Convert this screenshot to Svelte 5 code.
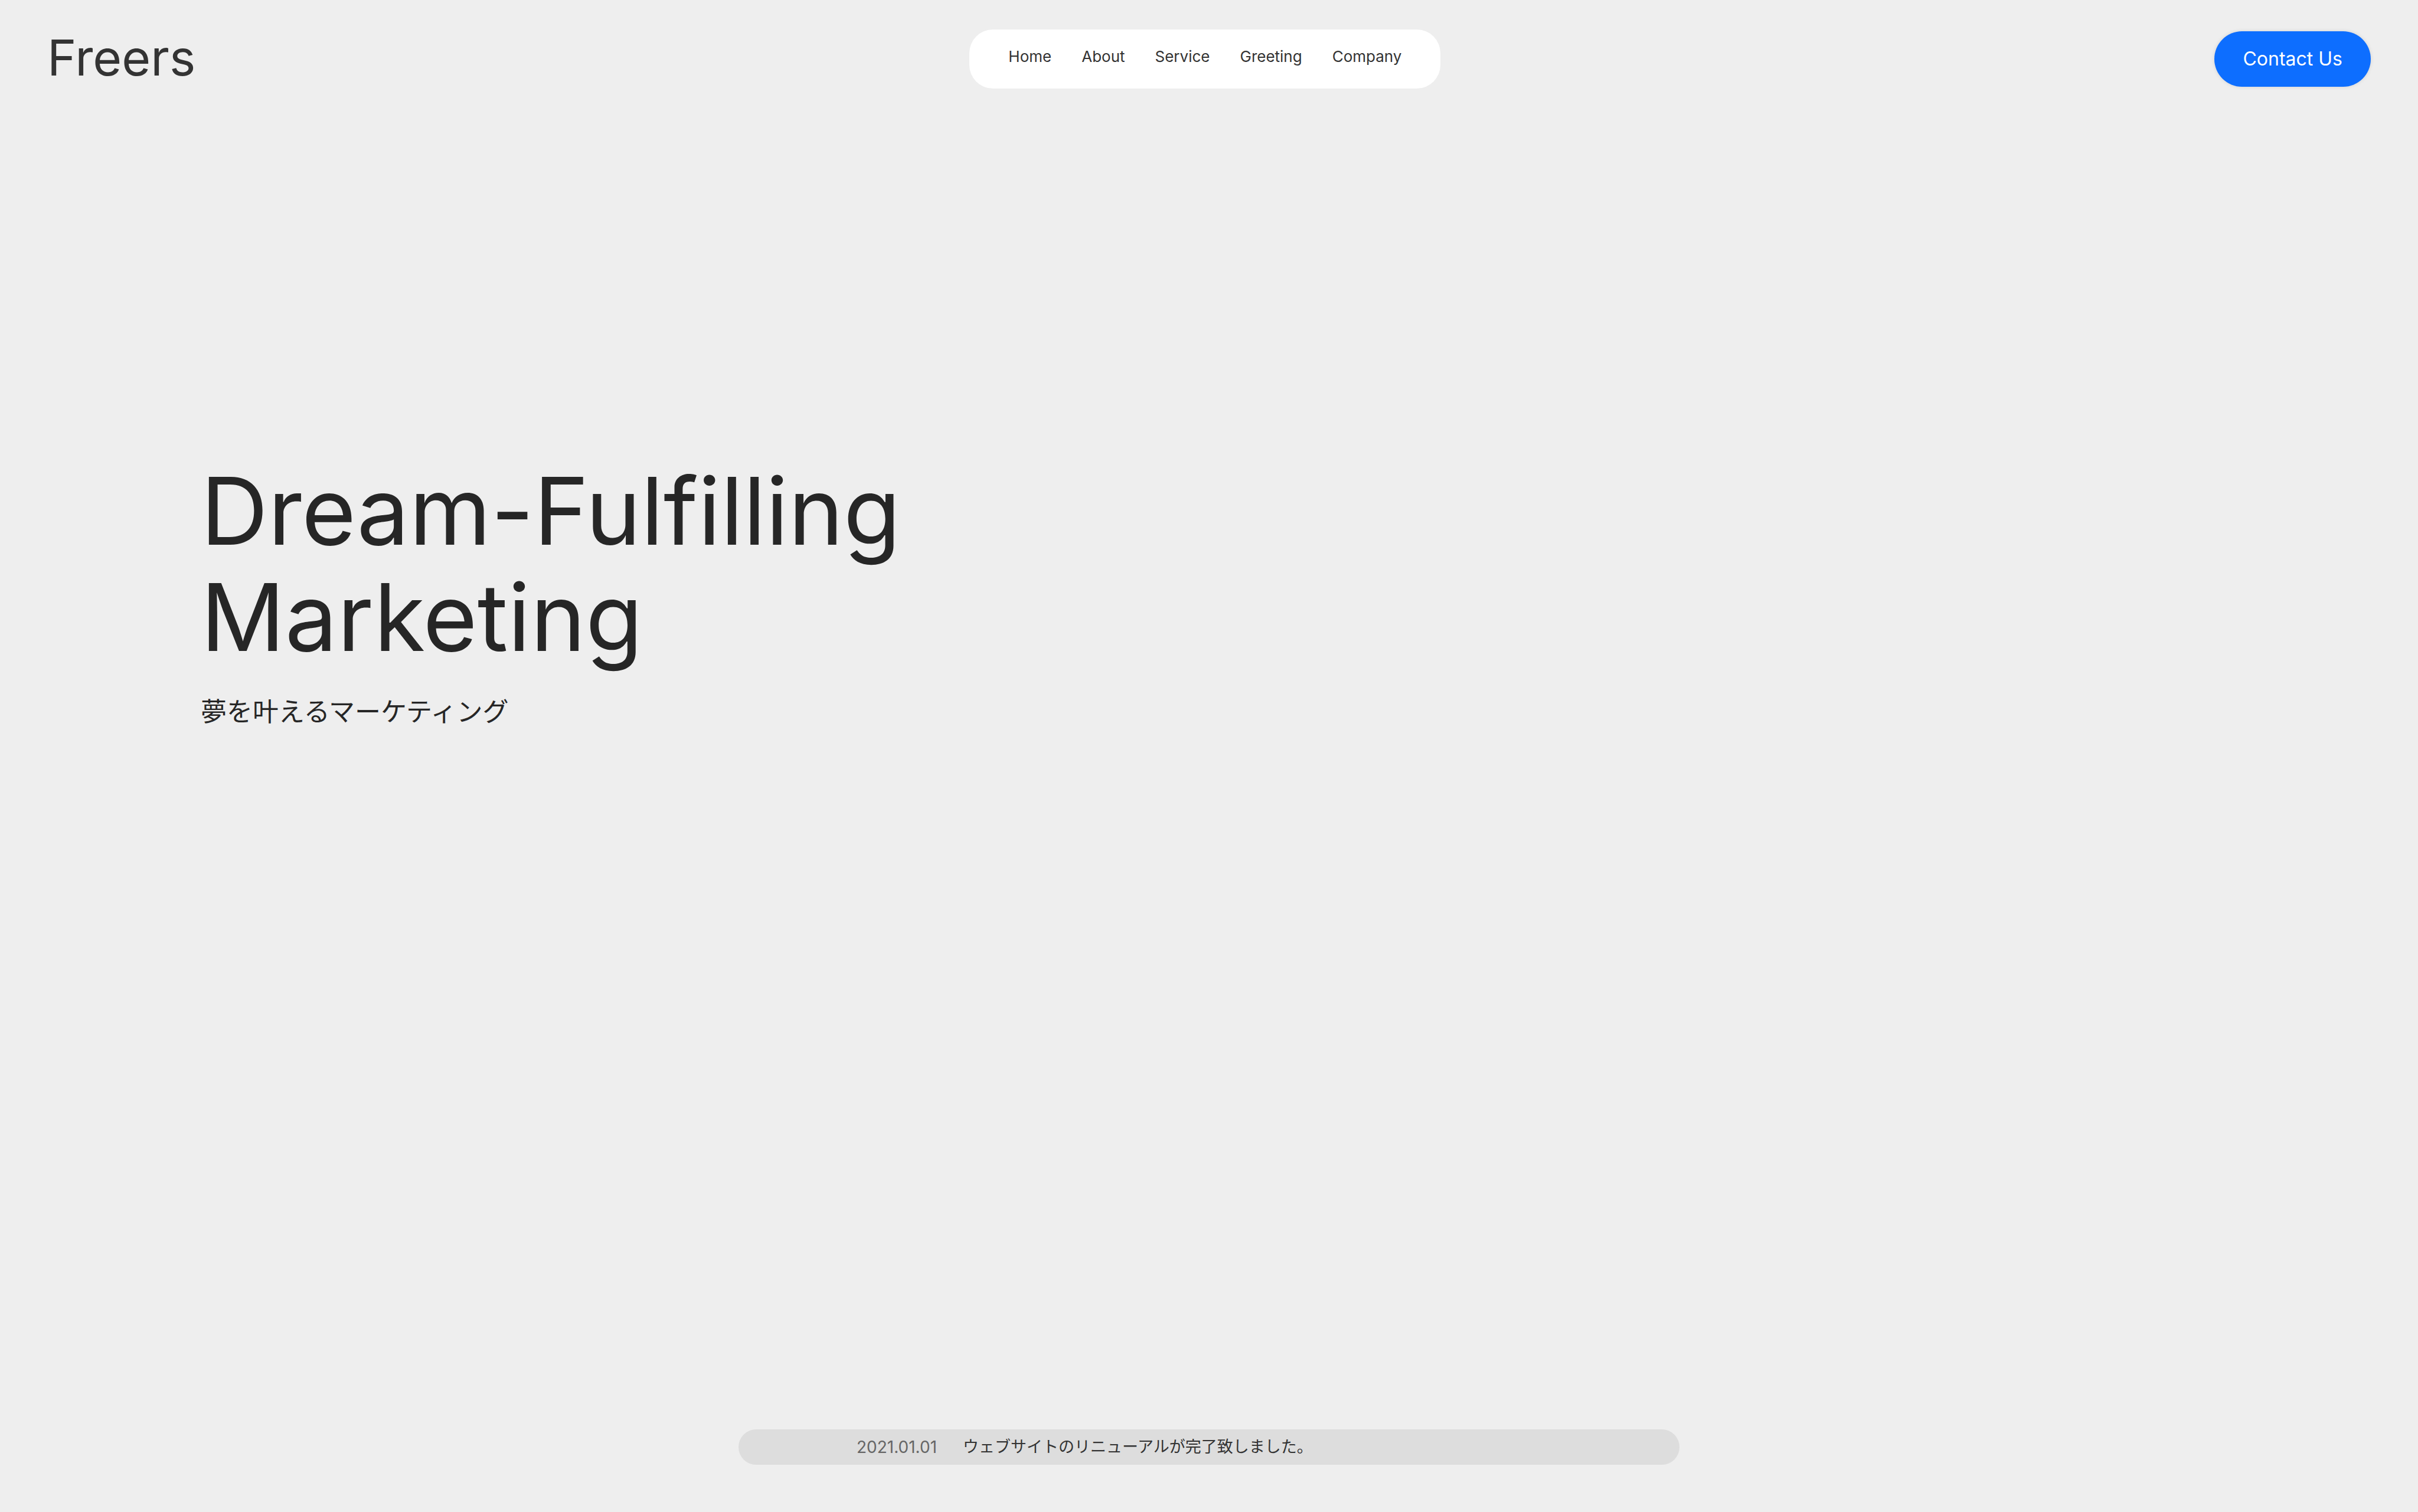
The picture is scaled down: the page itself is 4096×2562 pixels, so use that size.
<script>
  const links = ['Home', 'About', 'Service', 'Greeting', 'Company'];
</script>

<div class="page" lang="ja">
  <header class="header">
    <a class="logo" href="#home">Freers</a>
    <nav class="nav" aria-label="Main">
      {#each links as link}
        <a href={'#' + link.toLowerCase()}>{link}</a>
      {/each}
    </nav>
    <button class="contact" type="button">Contact Us</button>
  </header>

  <main class="hero">
    <h1>Dream-Fulfilling<br />Marketing</h1>
    <p>夢を叶えるマーケティング</p>
  </main>

  <a class="news" href="#news">
    <time datetime="2021-01-01">2021.01.01</time>
    <span class="message">ウェブサイトのリニューアルが完了致しました。</span>
  </a>
</div>

<style>
  :global(body) {
    margin: 0;
    background: #eeeeee;
  }
  .page {
    box-sizing: border-box;
    min-height: 100vh;
    display: flex;
    flex-direction: column;
    padding: 50px 80px 80px;
    background: #eeeeee;
    color: #333333;
    font-family: Inter, 'Noto Sans CJK JP', sans-serif;
  }
  a {
    color: inherit;
    text-decoration: none;
  }
  .header {
    display: flex;
    align-items: center;
    justify-content: space-between;
  }
  .logo {
    padding-bottom: 4px;
    font-size: 84px;
    line-height: 96px;
  }
  .nav {
    display: flex;
    align-items: center;
    gap: 51px;
    padding: 30px 66px 38px;
    border-radius: 40px;
    background: #ffffff;
    font-size: 26px;
    line-height: 32px;
  }
  .contact {
    padding: 27px 48px;
    border: 0;
    border-radius: 48px;
    background: #0d6eff;
    box-shadow: 0 0 6px rgba(0, 0, 0, 0.12);
    color: #ffffff;
    font-family: inherit;
    font-size: 32px;
    line-height: 40px;
  }
  .hero {
    padding: 626px 260px 80px;
    color: #262626;
  }
  h1 {
    margin: 0;
    font-size: 158px;
    font-weight: 400;
    line-height: 180px;
  }
  p {
    margin: 40px 0 0;
    font-size: 44px;
    line-height: 60px;
  }
  .news {
    box-sizing: border-box;
    display: flex;
    align-items: center;
    gap: 44px;
    width: 100%;
    max-width: 1594px;
    margin: auto auto 0;
    padding: 0 200px;
    border-radius: 30px;
    background: #dddddd;
    font-size: 28px;
    line-height: 60px;
  }
  time {
    color: #666666;
  }
  .message {
    font-size: 27px;
  }
</style>
